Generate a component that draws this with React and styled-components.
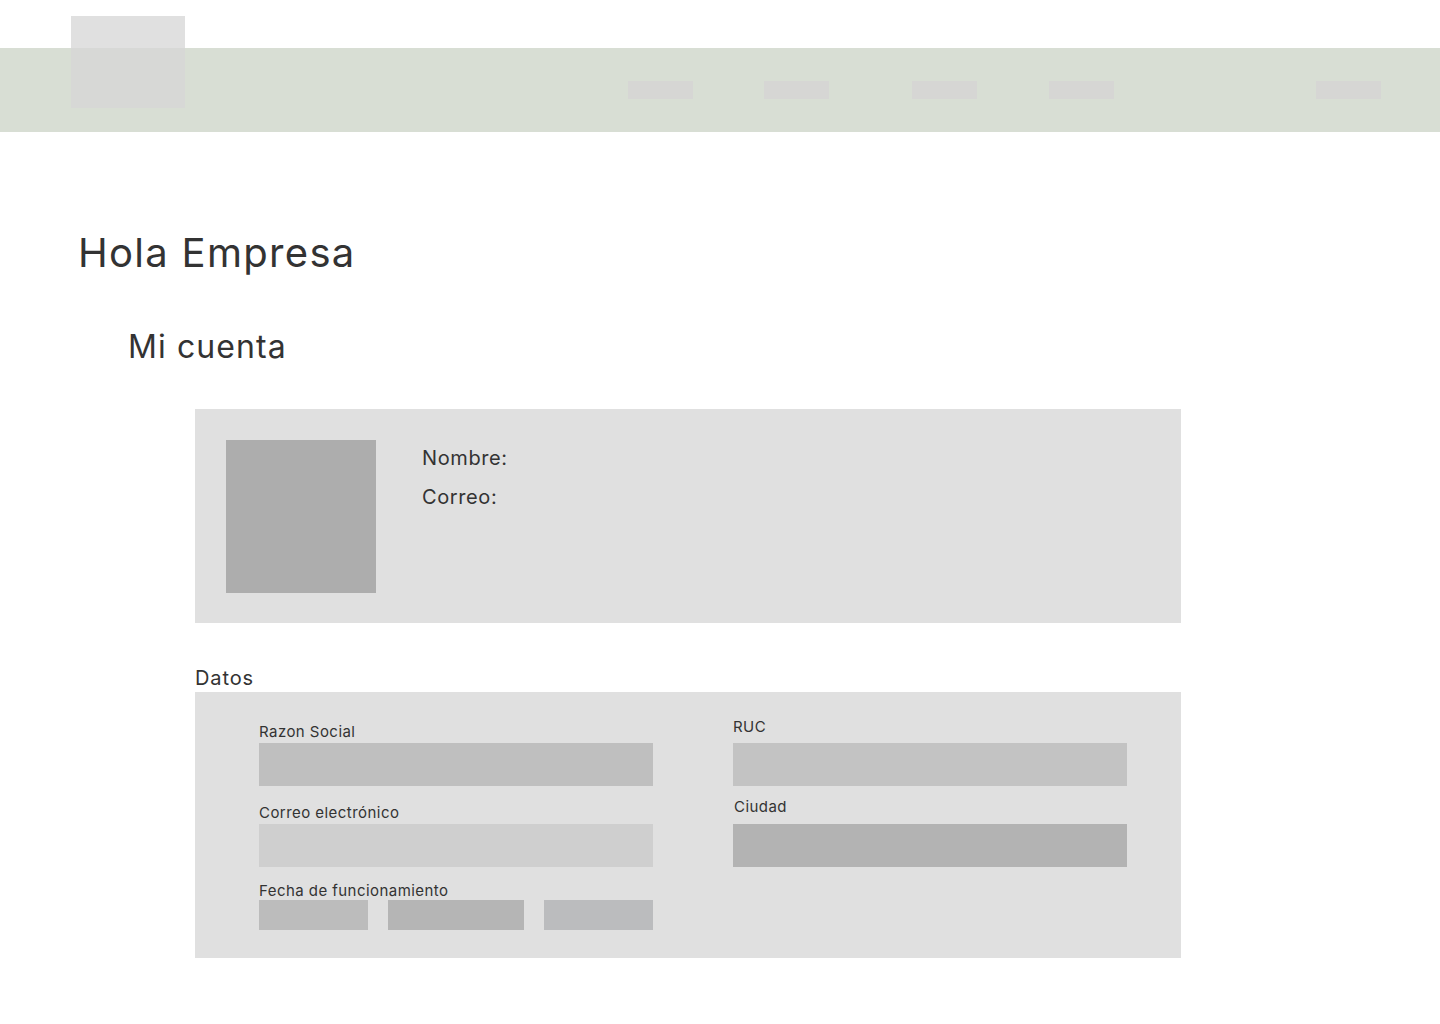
import React from 'react';
import styled, { createGlobalStyle } from 'styled-components'

const GlobalStyle = createGlobalStyle`
    body {
        margin: 0;
        background-color: white;
        font-family: Inter, "Noto Sans", sans-serif;
        color: #333333;
    }
`

const Header = styled.header`
    position: relative;
    padding-top: 48px;
`

const Band = styled.div`
    display: flex;
    align-items: center;
    height: 84px;
    padding-left: 628px;
    background-color: #d8ded4;
`

const Logo = styled.div`
    position: absolute;
    top: 16px;
    left: 71px;
    width: 114px;
    height: 92px;
    background-color: rgba(214, 214, 214, 0.76);
`

const NavItem = styled.div`
    width: 65px;
    height: 18px;
    margin-left: ${props => props.$ml || 0}px;
    background-color: #d6d6d4;
`

const Main = styled.main`
    padding: 0 0 60px 78px;
`

const Title = styled.h1`
    margin: 97px 0 0;
    font-size: 40px;
    line-height: 48px;
    font-weight: 400;
    letter-spacing: 1.3px;
`

const Subtitle = styled.h2`
    margin: 50px 0 0 50px;
    font-size: 32px;
    line-height: 40px;
    font-weight: 400;
    letter-spacing: 1.1px;
`

const Section = styled.section`
    width: 986px;
    margin-left: 117px;
`

const Card = styled.div`
    display: flex;
    margin-top: 42px;
    padding: 31px 31px 30px;
    background-color: #e0e0e0;
`

const Avatar = styled.div`
    width: 150px;
    height: 153px;
    background-color: #adadad;
`

const Info = styled.div`
    display: flex;
    flex-direction: column;
    gap: 12px;
    margin-left: 46px;
    padding-top: 5px;
`

const InfoLine = styled.div`
    font-size: 20px;
    line-height: 27px;
    letter-spacing: 0.6px;
`

const DatosLabel = styled.div`
    margin-top: 41px;
    font-size: 20px;
    line-height: 28px;
    letter-spacing: 0.9px;
`

const DataCard = styled.div`
    display: grid;
    grid-template-columns: 394px 394px;
    column-gap: 80px;
    padding: 27px 0 28px 64px;
    background-color: #e0e0e0;
`

const Column = styled.div`
    display: flex;
    flex-direction: column;
`

const FieldLabel = styled.div`
    position: relative;
    top: ${props => props.$shift || 0}px;
    height: 24px;
    margin-top: ${props => props.$mt || 0}px;
    padding-left: ${props => props.$pl || 0}px;
    font-size: 15px;
    line-height: 26px;
    letter-spacing: 0.45px;
    white-space: nowrap;
`

const Input = styled.div`
    height: 43px;
    background-color: ${props => props.$bg};
`

const DateRow = styled.div`
    display: flex;
    gap: 20px;
`

const DateBox = styled.div`
    flex: ${props => props.$grow};
    height: 30px;
    background-color: ${props => props.$bg};
`

const App = () => {
    return (
        <>
            <GlobalStyle />
            <Header>
                <Band>
                    <NavItem />
                    <NavItem $ml={71} />
                    <NavItem $ml={83} />
                    <NavItem $ml={72} />
                    <NavItem $ml={202} />
                </Band>
                <Logo />
            </Header>
            <Main>
                <Title>Hola Empresa</Title>
                <Subtitle>Mi cuenta</Subtitle>
                <Section>
                    <Card>
                        <Avatar />
                        <Info>
                            <InfoLine>Nombre:</InfoLine>
                            <InfoLine>Correo:</InfoLine>
                        </Info>
                    </Card>
                    <DatosLabel>Datos</DatosLabel>
                    <DataCard>
                        <Column>
                            <FieldLabel>Razon Social</FieldLabel>
                            <Input $bg="#bfbfbf" />
                            <FieldLabel $mt={14}>Correo electrónico</FieldLabel>
                            <Input $bg="#cfcfcf" />
                            <FieldLabel $mt={9} $shift={2}>Fecha de funcionamiento</FieldLabel>
                            <DateRow>
                                <DateBox $grow={109} $bg="#bcbcbc" />
                                <DateBox $grow={136} $bg="#b5b5b5" />
                                <DateBox $grow={109} $bg="#bbbcbe" />
                            </DateRow>
                        </Column>
                        <Column>
                            <FieldLabel $shift={-5}>RUC</FieldLabel>
                            <Input $bg="#c3c3c3" />
                            <FieldLabel $mt={14} $pl={1} $shift={-6}>Ciudad</FieldLabel>
                            <Input $bg="#b3b3b3" />
                        </Column>
                    </DataCard>
                </Section>
            </Main>
        </>
    )
}

export default App
